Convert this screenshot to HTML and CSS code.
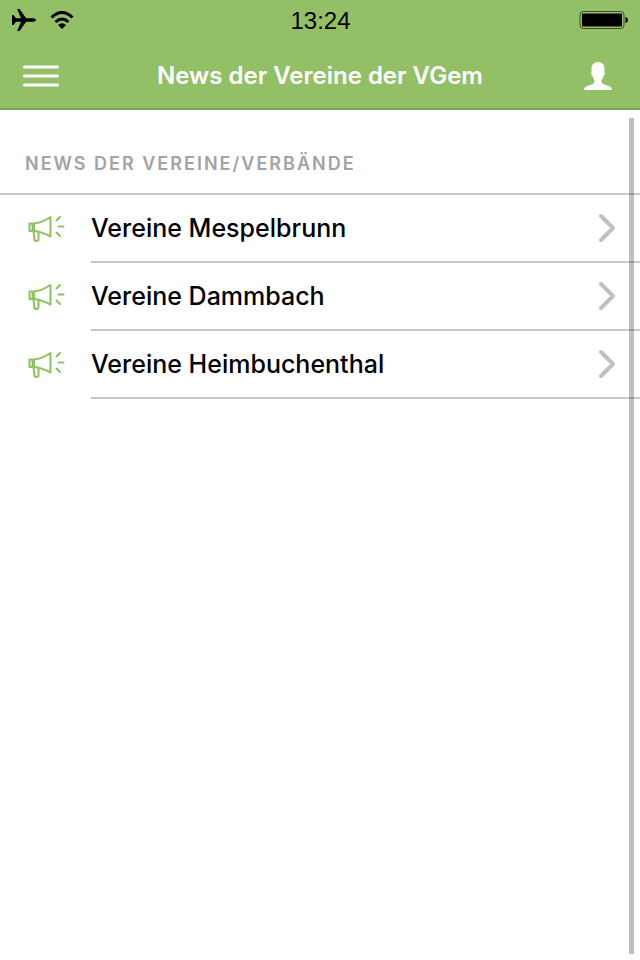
FILE: index.html
```html
<!DOCTYPE html>
<html lang="de">

<head>
    <meta charset="utf-8">
    <meta name="viewport" content="width=device-width, initial-scale=1">
    <title>News der Vereine der VGem</title>
    <link rel="stylesheet" href="styles.css">
</head>

<body>
    <svg class="symbols" aria-hidden="true">
        <symbol id="icon-megaphone" viewBox="0 0 38 30">
            <path d="M2.500 9.500H7v7.500H2.500zM5.500 9.500V17M7 9.500C12.500 9 18 6.500 23.500 3v19.500C18 19.500 12.500 17.500 7 17M6.500 17l.8 8q.3 2 2.200 2t2-2v-6.500M29.500 6.500l3.500-3.500M31.500 12.500h5M29.500 18.500l3.500 3.500" />
        </symbol>
        <symbol id="icon-chevron" viewBox="0 0 18 30">
            <path d="M3 3l12 12L3 27" />
        </symbol>
    </svg>

    <header class="header">
        <!-- Statusleiste -->
        <div class="status-bar">
            <div class="status-left">
                <svg class="icon-plane" viewBox="0 0 24 22">
                    <path d="M0 6h1.500L4 9.200h5L5.200 0h2.300l6.700 9.200H21q3 .3 3 1.800t-3 1.800h-6.800L7.500 22H5.200L9 12.800H4L1.500 16H0z" />
                </svg>
                <svg class="icon-wifi" viewBox="0 0 24 18">
                    <path class="arc" d="M1.500 6.500Q12-3.500 22.500 6.500M5.500 11Q12 5 18.500 11" />
                    <path d="M8 14q4-3.500 8 0l-4 4z" />
                </svg>
            </div>
            <time class="clock">13:24</time>
            <svg class="icon-battery" viewBox="0 0 50 20">
                <rect class="case" x="1" y="1.500" width="44" height="17" rx="3.500" />
                <rect x="3" y="3.500" width="40" height="13" rx="1" />
                <path d="M46.500 7q2.500.5 2.500 3t-2.500 3z" />
            </svg>
        </div>

        <!-- Navigation -->
        <div class="nav-bar">
            <button class="nav-btn" type="button" aria-label="Menü">
                <svg class="icon-menu" viewBox="0 0 36 22">
                    <path d="M1.500 2h33M1.500 11h33M1.500 20h33" />
                </svg>
            </button>
            <h1 class="nav-title">News der Vereine der VGem</h1>
            <button class="nav-btn right" type="button" aria-label="Profil">
                <svg class="icon-user" viewBox="0 0 28 28">
                    <path d="M14 0c4.500 0 6.500 3 6.500 7 0 1.500-.1 2.500-.2 3.200.9.600.4 3.300-.8 3.800-.5 2-1.200 3.200-2 4 0 2 .2 3.300 1.500 4 2.500 1.200 6 1.500 7.500 3 .9.800 1.300 1.700 1.500 3H0c.2-1.300.6-2.200 1.500-3C3 23.500 6.500 23.200 9 22c1.300-.7 1.500-2 1.500-4-.8-.8-1.500-2-2-4-1.200-.5-1.700-3.200-.8-3.800C7.600 9.500 7.500 8.500 7.500 7c0-4 2-7 6.500-7z" />
                </svg>
            </button>
        </div>
    </header>

    <main>
        <h2 class="list-header">News der Vereine/Verbände</h2>
        <ul class="list">
            <li>
                <a class="list-item" href="#mespelbrunn">
                    <svg class="icon-megaphone"><use href="#icon-megaphone" /></svg>
                    <span class="list-label">Vereine Mespelbrunn
                        <svg class="icon-chevron"><use href="#icon-chevron" /></svg>
                    </span>
                </a>
            </li>
            <li>
                <a class="list-item" href="#dammbach">
                    <svg class="icon-megaphone"><use href="#icon-megaphone" /></svg>
                    <span class="list-label">Vereine Dammbach
                        <svg class="icon-chevron"><use href="#icon-chevron" /></svg>
                    </span>
                </a>
            </li>
            <li>
                <a class="list-item" href="#heimbuchenthal">
                    <svg class="icon-megaphone"><use href="#icon-megaphone" /></svg>
                    <span class="list-label">Vereine Heimbuchenthal
                        <svg class="icon-chevron"><use href="#icon-chevron" /></svg>
                    </span>
                </a>
            </li>
        </ul>
    </main>

    <div class="scroll-indicator"></div>
</body>

</html>
```

FILE: styles.css
```css
* {
    box-sizing: border-box;
}

body {
    margin: 0;
    background: #fff;
    color: #000;
    font-family: Inter, "Liberation Sans", sans-serif;
}

svg {
    display: block;
    flex: none;
}

.symbols {
    display: none;
}

/* Header */
.header {
    background: #93c067;
    border-bottom: 2px solid #7fa45a;
}

.status-bar {
    display: grid;
    grid-template-columns: 1fr auto 1fr;
    align-items: center;
    height: 40px;
    padding: 0 11px 0 12px;
}

.status-left {
    display: flex;
    align-items: center;
    gap: 14px;
}

.clock {
    padding-top: 2px;
    font-family: "Liberation Sans", sans-serif;
    font-size: 24px;
    line-height: 38px;
}

.icon-plane {
    width: 24px;
    height: 22px;
}

.icon-wifi {
    width: 24px;
    height: 18px;
}

.icon-wifi .arc {
    fill: none;
    stroke: #000;
    stroke-width: 3;
}

.icon-battery {
    width: 50px;
    height: 20px;
    justify-self: end;
}

.icon-battery .case {
    fill: none;
    stroke: #3f4a2e;
    stroke-width: 1;
}

.nav-bar {
    display: grid;
    grid-template-columns: 1fr auto 1fr;
    align-items: center;
    height: 68px;
    padding: 4px 23px 0;
}

.nav-btn {
    justify-self: start;
    padding: 0;
    border: none;
    background: none;
    cursor: pointer;
}

.nav-btn.right {
    justify-self: end;
    padding-right: 5px;
}

.nav-title {
    margin: 0;
    color: #fff;
    font-size: 24px;
    font-weight: 600;
    line-height: 32px;
}

.icon-menu {
    width: 36px;
    height: 22px;
    stroke: #fff;
    stroke-width: 3;
    stroke-linecap: round;
}

.icon-user {
    width: 28px;
    height: 28px;
    fill: #fff;
}

/* Liste */
.list-header {
    margin: 0;
    padding: 42px 25px 17px;
    border-bottom: 2px solid #c8c7cc;
    color: #a3a3a3;
    font-size: 18px;
    font-weight: 600;
    line-height: 24px;
    letter-spacing: 2px;
    text-transform: uppercase;
}

.list {
    margin: 0;
    padding: 0;
    list-style: none;
}

.list-item {
    display: flex;
    align-items: center;
    gap: 26px;
    padding-left: 27px;
    color: inherit;
    text-decoration: none;
}

.list-label {
    display: flex;
    flex: 1;
    align-items: center;
    justify-content: space-between;
    height: 68px;
    padding-right: 24px;
    border-bottom: 2px solid #c8c7cc;
    font-size: 25px;
    font-weight: 500;
    line-height: 32px;
}

.icon-megaphone {
    width: 38px;
    height: 30px;
    fill: none;
    stroke: #8fc160;
    stroke-width: 2;
    stroke-linecap: round;
    stroke-linejoin: round;
}

.icon-chevron {
    width: 18px;
    height: 30px;
    fill: none;
    stroke: #c0c0c0;
    stroke-width: 4;
    stroke-linecap: round;
    stroke-linejoin: round;
}

.scroll-indicator {
    position: fixed;
    top: 118px;
    right: 6px;
    bottom: 6px;
    width: 5px;
    background: rgba(0, 0, 0, 0.25);
}
```
